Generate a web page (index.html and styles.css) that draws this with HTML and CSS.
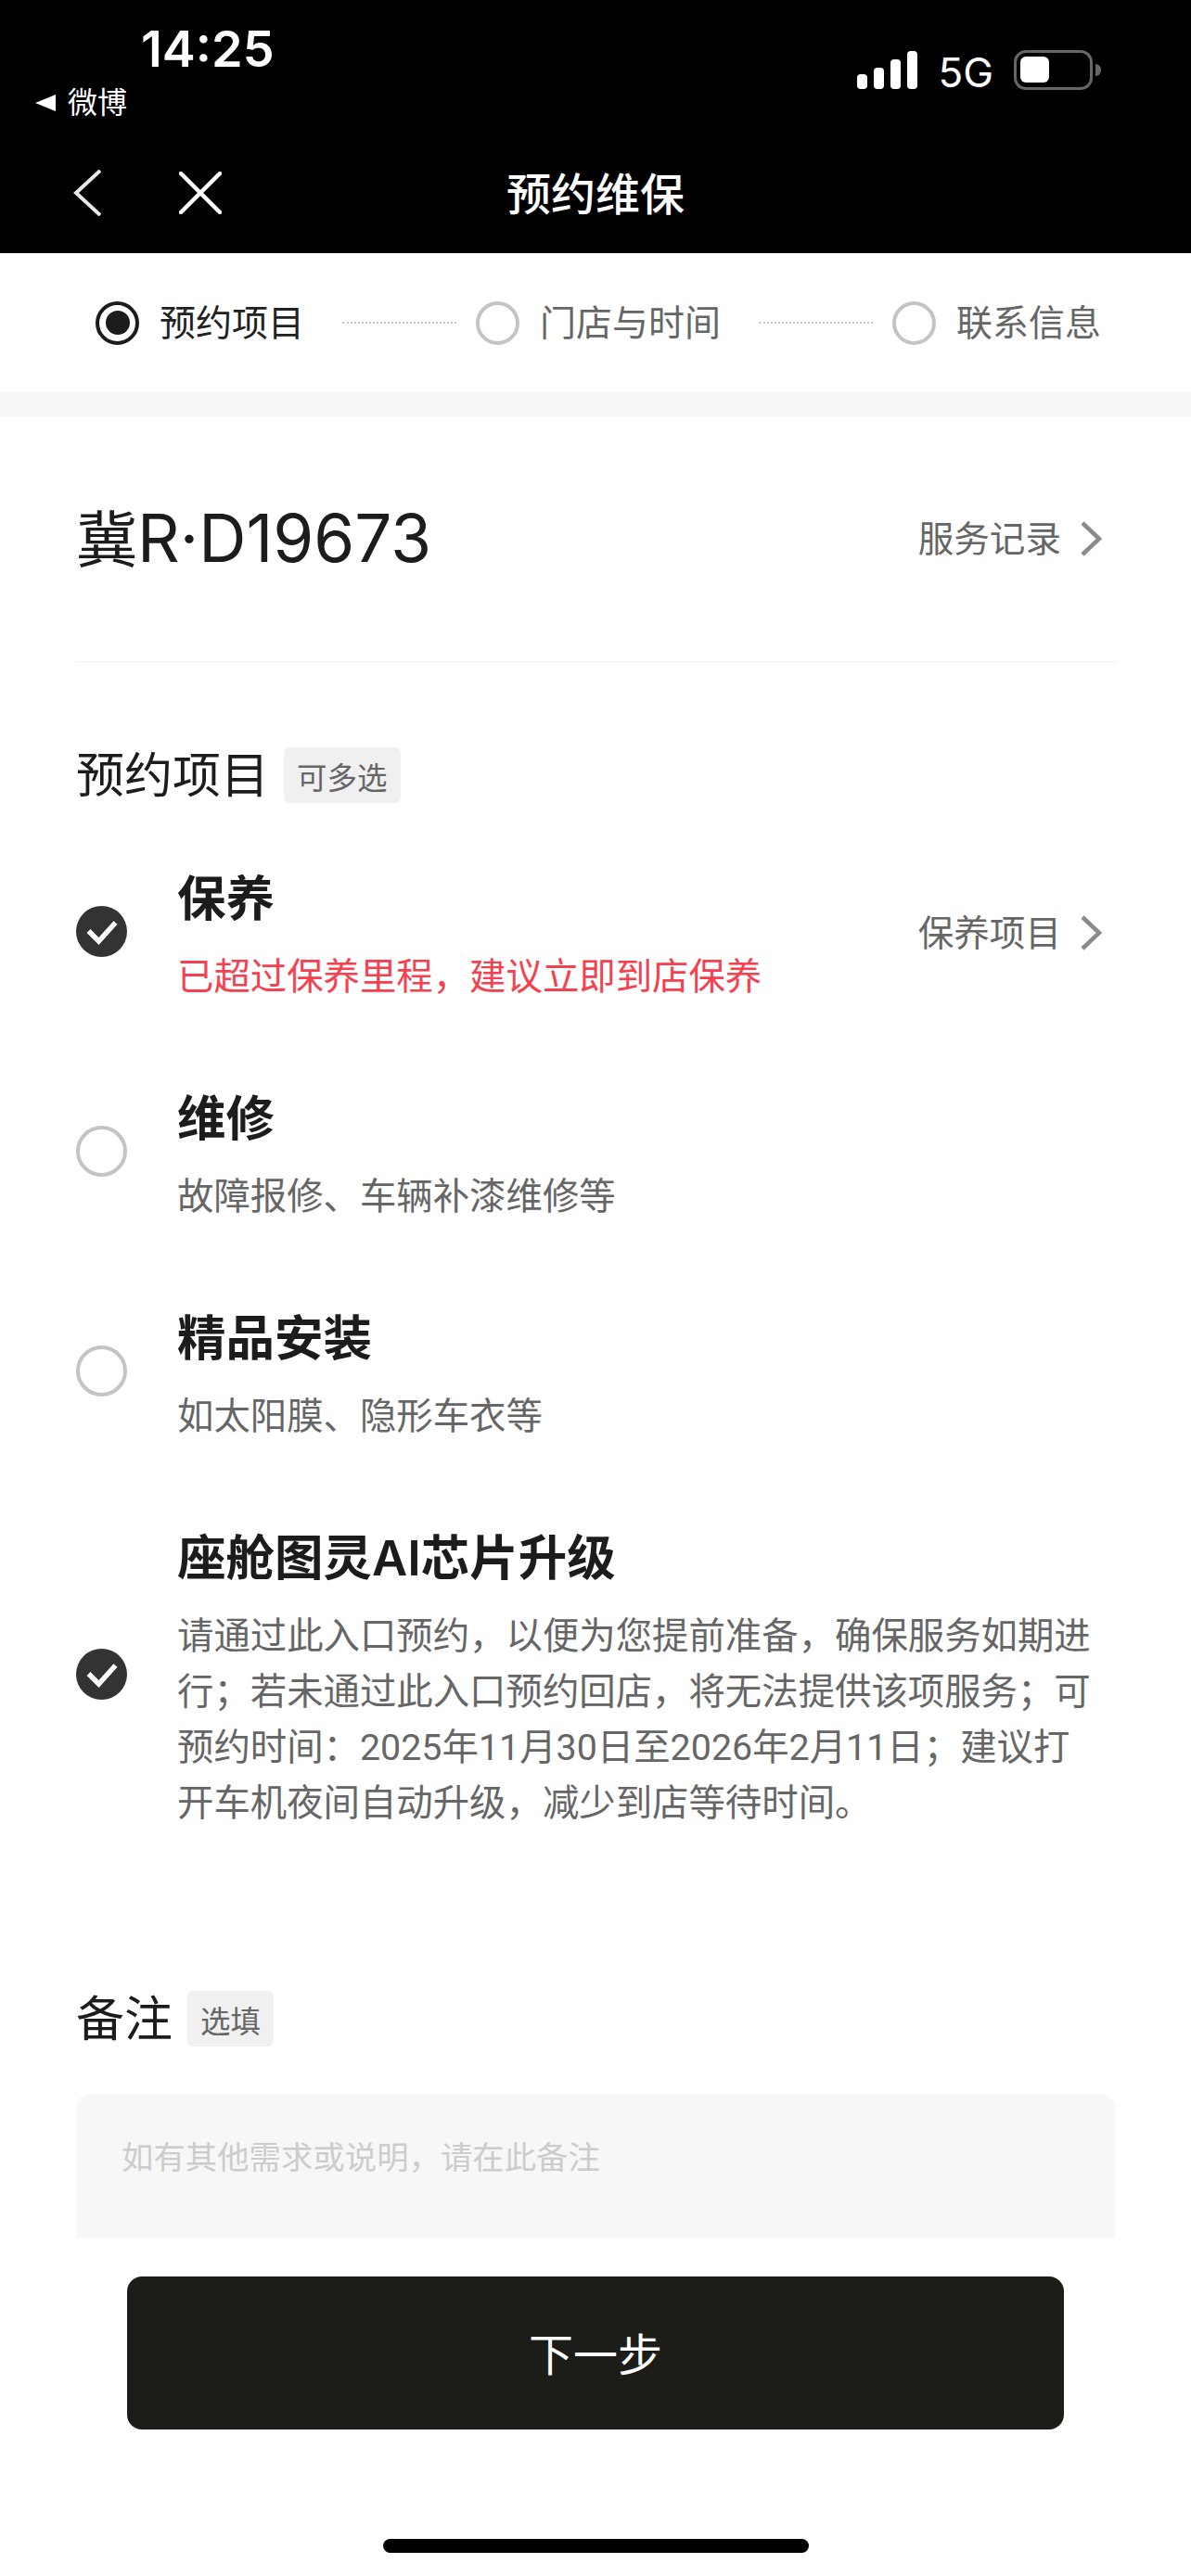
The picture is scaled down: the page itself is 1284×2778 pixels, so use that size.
FILE: index.html
```html
<!DOCTYPE html>
<html lang="zh-CN">
<head>
    <meta charset="UTF-8">
    <meta name="viewport" content="width=device-width, initial-scale=1.0">
    <title>预约维保</title>
    <link rel="stylesheet" href="styles.css">
</head>
<body>
<div class="page">

    <div class="top">
        <div class="status">
            <div class="status-left">
                <div class="time">14:25</div>
                <div class="back-app">
                    <svg class="back-arrow" viewBox="0 0 22 18"><path d="M0 9 22 0V18Z" fill="#fff"/></svg>
                    <span>微博</span>
                </div>
            </div>
            <div class="status-right">
                <div class="signal">
                    <i class="bar bar1"></i>
                    <i class="bar bar2"></i>
                    <i class="bar bar3"></i>
                    <i class="bar bar4"></i>
                </div>
                <span class="net">5G</span>
                <div class="battery"><div class="battery-level"></div></div>
                <div class="battery-nub"></div>
            </div>
        </div>
        <div class="nav">
            <div class="nav-icons">
                <svg class="nav-back" viewBox="0 0 30 50"><path d="M29 1 3 25 29 49" fill="none" stroke="#e8e8e8" stroke-width="4"/></svg>
                <svg class="nav-close" viewBox="0 0 46 46"><path d="M2 2 44 44M44 2 2 44" fill="none" stroke="#fff" stroke-width="4.5" stroke-linecap="round"/></svg>
            </div>
            <div class="nav-title">预约维保</div>
        </div>
    </div>

    <div class="steps">
        <div class="radio radio-active"></div>
        <span class="step-text step-on">预约项目</span>
        <div class="step-line"></div>
        <div class="radio"></div>
        <span class="step-text">门店与时间</span>
        <div class="step-line"></div>
        <div class="radio"></div>
        <span class="step-text">联系信息</span>
    </div>
    <div class="band"></div>

    <div class="content">
        <div class="plate-row">
            <div class="plate"><span class="plate-cn">冀</span>R·D19673</div>
            <div class="link">
                <span>服务记录</span>
                <svg class="chevron" viewBox="0 0 24 38"><path d="M3 2 21 19 3 36" fill="none" stroke="#8a8a8a" stroke-width="4.5"/></svg>
            </div>
        </div>

        <div class="section-head section-first">
            <h2>预约项目</h2>
            <span class="tag">可多选</span>
        </div>

        <div class="items">
            <div class="item">
                <div class="check">
                    <svg viewBox="0 0 55 55"><path d="M13.500 27 24.500 38 42.500 18" fill="none" stroke="#fff" stroke-width="5.500"/></svg>
                </div>
                <div class="item-body">
                    <div class="item-title">保养</div>
                    <div class="item-desc warn">已超过保养里程，建议立即到店保养</div>
                </div>
                <div class="link item-link">
                    <span>保养项目</span>
                    <svg class="chevron" viewBox="0 0 24 38"><path d="M3 2 21 19 3 36" fill="none" stroke="#8a8a8a" stroke-width="4.5"/></svg>
                </div>
            </div>
            <div class="item">
                <div class="radio radio-big"></div>
                <div class="item-body">
                    <div class="item-title">维修</div>
                    <div class="item-desc">故障报修、车辆补漆维修等</div>
                </div>
            </div>
            <div class="item">
                <div class="radio radio-big"></div>
                <div class="item-body">
                    <div class="item-title">精品安装</div>
                    <div class="item-desc">如太阳膜、隐形车衣等</div>
                </div>
            </div>
            <div class="item">
                <div class="check">
                    <svg viewBox="0 0 55 55"><path d="M13.500 27 24.500 38 42.500 18" fill="none" stroke="#fff" stroke-width="5.500"/></svg>
                </div>
                <div class="item-body item-body-long">
                    <div class="item-title">座舱图灵AI芯片升级</div>
                    <div class="item-desc">请通过此入口预约，以便为您提前准备，确保服务如期进行；若未通过此入口预约回店，将无法提供该项服务；可预约时间：2025年11月30日至2026年2月11日；建议打开车机夜间自动升级，减少到店等待时间。</div>
                </div>
            </div>
        </div>

        <div class="section-head section-note">
            <h2>备注</h2>
            <span class="tag">选填</span>
        </div>
        <div class="note">如有其他需求或说明，请在此备注</div>
    </div>

    <div class="footer">
        <button class="next">下一步</button>
        <div class="home-bar"></div>
    </div>

</div>
</body>
</html>
```

FILE: styles.css
```css
body {
    margin: 0;
    padding: 0;
    background: #fff;
    font-family: Inter, "Noto Sans CJK SC", sans-serif;
}
.page {
    width: 1284px;
    height: 2778px;
    overflow: hidden;
    display: flex;
    flex-direction: column;
}

/* top black area */
.top {
    height: 273px;
    background: #000;
    color: #fff;
    flex-shrink: 0;
}
.status {
    height: 150px;
    display: flex;
    justify-content: space-between;
}
.status-left {
    padding: 24px 0 0 38px;
}
.time {
    margin-left: 114px;
    font-size: 54px;
    line-height: 58px;
    font-weight: 600;
}
.back-app {
    display: flex;
    align-items: center;
    gap: 13px;
    margin-top: 7px;
    font-size: 32px;
    line-height: 44px;
}
.back-arrow {
    width: 22px;
    height: 18px;
}
.status-right {
    display: flex;
    align-items: flex-start;
    padding: 54px 97px 0 0;
}
.signal {
    display: flex;
    align-items: flex-end;
    gap: 7px;
    height: 42px;
}
.bar {
    display: block;
    width: 11px;
    background: #fff;
    border-radius: 4px;
}
.bar1 { height: 16px; }
.bar2 { height: 23px; }
.bar3 { height: 32px; }
.bar4 { height: 41px; }
.net {
    margin: 1px 22px 0 22px;
    font-size: 44px;
    line-height: 46px;
    font-weight: 400;
}
.battery {
    box-sizing: border-box;
    width: 85px;
    height: 43px;
    padding: 4px;
    border: 3.5px solid #666;
    border-radius: 13px;
}
.battery-level {
    width: 31px;
    height: 28px;
    background: #fff;
    border-radius: 6px;
}
.battery-nub {
    width: 6px;
    height: 13px;
    margin: 15px 0 0 3px;
    background: #666;
    border-radius: 0 7px 7px 0;
}
.nav {
    height: 123px;
    display: flex;
    justify-content: center;
    position: relative;
}
.nav-icons {
    position: absolute;
    left: 79px;
    top: 33px;
    display: flex;
    align-items: center;
    gap: 84px;
}
.nav-back {
    width: 30px;
    height: 50px;
}
.nav-close {
    width: 46px;
    height: 46px;
}
.nav-title {
    margin-top: 32px;
    font-size: 48px;
    line-height: 56px;
    font-weight: 500;
}

/* steps */
.steps {
    height: 150px;
    flex-shrink: 0;
    padding-left: 103px;
    display: flex;
    align-items: center;
}
.radio {
    box-sizing: border-box;
    width: 47px;
    height: 47px;
    flex-shrink: 0;
    border: 4px solid #c4c4c4;
    border-radius: 50%;
}
.radio-active {
    display: flex;
    align-items: center;
    justify-content: center;
    border-color: #1c1c1c;
}
.radio-active::before {
    content: "";
    width: 26px;
    height: 26px;
    background: #1c1c1c;
    border-radius: 50%;
}
.step-text {
    margin-left: 22px;
    font-size: 39px;
    line-height: 50px;
    color: #666;
}
.step-on {
    color: #222;
}
.step-line {
    width: 123px;
    margin: 0 21px 0 41px;
    border-top: 2px dotted #c8c8c8;
}
.band {
    height: 26px;
    flex-shrink: 0;
    background: #f7f7f7;
}

/* content */
.content {
    padding: 0 82px;
}
.plate-row {
    height: 264px;
    border-bottom: 1px solid #eee;
    display: flex;
    align-items: center;
    justify-content: space-between;
}
.plate {
    font-size: 71px;
    line-height: 80px;
    color: #1c1c1c;
}
.plate-cn {
    font-size: 66px;
}
.link {
    display: flex;
    align-items: center;
    gap: 20px;
    padding-right: 14px;
    font-size: 38.6px;
    line-height: 50px;
    color: #666;
}
.chevron {
    width: 24px;
    height: 38px;
}
.section-head {
    display: flex;
    align-items: center;
    gap: 16px;
}
.section-first {
    margin-top: 92px;
}
.section-note {
    margin-top: 172px;
}
.section-head h2 {
    margin: 0;
    padding-top: 2px;
    font-size: 52px;
    line-height: 58px;
    font-weight: 400;
    color: #1c1c1c;
}
.tag {
    height: 60px;
    padding: 0 14px;
    display: flex;
    align-items: center;
    background: #f0f0f0;
    border-radius: 6px;
    font-size: 32.500px;
    color: #666;
}
.items {
    margin-top: 71px;
    display: flex;
    flex-direction: column;
    gap: 90px;
}
.item {
    display: flex;
    align-items: center;
}
.check {
    width: 55px;
    height: 55px;
    flex-shrink: 0;
    margin-bottom: 12px;
    background: #333;
    border-radius: 50%;
}
.check svg {
    display: block;
    width: 55px;
    height: 55px;
}
.radio-big {
    width: 55px;
    height: 55px;
    margin-bottom: 12px;
}
.item-body {
    flex: 1;
    margin-left: 54px;
}
.item-body-long {
    padding-right: 18px;
}
.item-title {
    font-size: 52.500px;
    line-height: 64px;
    font-weight: 600;
    color: #1c1c1c;
}
.item-desc {
    margin-top: 23px;
    font-family: Roboto, "Noto Sans CJK SC", sans-serif;
    font-size: 39.400px;
    line-height: 60px;
    color: #666;
}
.warn {
    color: #f5414f;
}
.item-link {
    flex-shrink: 0;
    margin-bottom: 10px;
}
.note {
    box-sizing: border-box;
    height: 156px;
    margin-top: 51px;
    padding: 44px 0 0 49px;
    background: #f7f7f7;
    border-radius: 16px 16px 0 0;
    font-size: 34.400px;
    line-height: 50px;
    color: #ccc;
}

/* bottom */
.footer {
    display: flex;
    flex-direction: column;
    align-items: center;
}
.next {
    width: 1010px;
    height: 165px;
    margin-top: 41px;
    padding-bottom: 4px;
    background: #1c1d19;
    color: #fff;
    border: none;
    border-radius: 16px;
    font-family: inherit;
    font-size: 48px;
}
.home-bar {
    width: 459px;
    height: 15px;
    margin-top: 118px;
    background: #000;
    border-radius: 8px;
}
```
